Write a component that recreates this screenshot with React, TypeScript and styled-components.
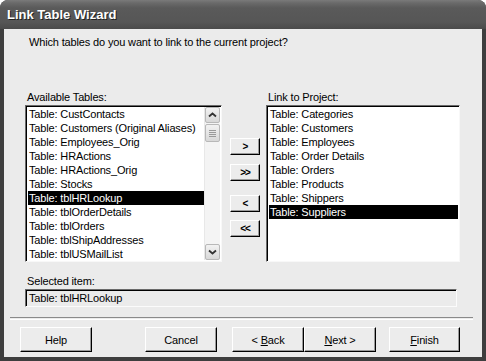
import styled, { createGlobalStyle } from "styled-components";

const Global = createGlobalStyle`
  html, body {
    margin: 0;
    padding: 0;
    background: #ffffff;
  }
  body {
    font-family: "Liberation Sans", Arial, sans-serif;
    font-size: 11px;
    letter-spacing: -0.15px;
    color: #000;
  }
`;

const Window = styled.div`
  width: 486px;
  height: 361px;
  box-sizing: border-box;
  display: flex;
  flex-direction: column;
  background: #3e3e3e;
  border-radius: 8px 8px 0 0;
  overflow: hidden;
`;

const TitleBar = styled.div`
  height: 29px;
  flex: none;
  display: flex;
  align-items: center;
  padding-left: 7px;
  background: linear-gradient(#7a7a7a 0px, #6a6a6a 3px, #5a5a5a 8px, #565656 22px, #4a4a4a 29px);
  color: #fff;
  font-weight: bold;
  font-size: 13px;
  letter-spacing: 0;
  text-shadow: 1px 1px 0 #222;
`;

const Client = styled.div`
  flex: 1;
  margin: 0 4px 4px 4px;
  background: #ebebeb;
  display: flex;
  flex-direction: column;
  padding: 6px 0 0 21px;
`;

const Question = styled.div`
  padding-left: 4px;
  height: 14px;
  line-height: 14px;
`;

const Lists = styled.div`
  display: flex;
  align-items: flex-start;
  margin-top: 41px;
`;

const Column = styled.div<{ $width: number }>`
  width: ${(p) => p.$width}px;
  display: flex;
  flex-direction: column;
`;

const Label = styled.div`
  height: 14px;
  line-height: 14px;
  padding-left: 2px;
  margin-bottom: 1px;
`;

const ListBox = styled.div`
  height: 157px;
  box-sizing: border-box;
  background: #fff;
  border-top: 1px solid #6a6a6a;
  border-left: 1px solid #6a6a6a;
  border-right: 1px solid #f8f8f8;
  border-bottom: 1px solid #f8f8f8;
  box-shadow: inset 1px 1px 0 #000;
  display: flex;
  padding: 1px 1px 1px 2px;
`;

const Items = styled.div`
  flex: 1;
  display: flex;
  flex-direction: column;
  overflow: hidden;
`;

const Item = styled.div<{ $selected?: boolean }>`
  height: 14px;
  line-height: 14px;
  padding-left: 1px;
  white-space: nowrap;
  background: ${(p) => (p.$selected ? "#000" : "transparent")};
  color: ${(p) => (p.$selected ? "#fff" : "#000")};
`;

const ScrollBar = styled.div`
  width: 15px;
  display: flex;
  flex-direction: column;
  background: #f4f4f4;
  border-left: 1px solid #e8e8e8;
`;

const ScrollButton = styled.div`
  height: 16px;
  box-sizing: border-box;
  border: 1px solid #b8b8b8;
  border-radius: 2px;
  background: linear-gradient(#f2f2f2, #d8d8d8);
  display: flex;
  align-items: center;
  justify-content: center;
`;

const Thumb = styled(ScrollButton)`
  height: 18px;
  margin-top: 1px;
  flex-direction: column;
  gap: 1px;
`;

const Grip = styled.div`
  width: 7px;
  height: 1px;
  background: #9a9a9a;
`;

const Track = styled.div`
  flex: 1;
`;

const Movers = styled.div`
  width: 30px;
  display: flex;
  flex-direction: column;
  margin: 0 6px 0 8px;
  padding-top: 48px;
`;

const SmallButton = styled.div<{ $gapAbove: number }>`
  height: 17px;
  box-sizing: border-box;
  margin-top: ${(p) => p.$gapAbove}px;
  background: #ececec;
  border-top: 1px solid #fff;
  border-left: 1px solid #fff;
  border-right: 1px solid #000;
  border-bottom: 1px solid #000;
  box-shadow: inset -1px -1px 0 #9a9a9a;
  display: flex;
  align-items: center;
  justify-content: center;
  font-weight: bold;
  font-size: 10px;
  letter-spacing: -1px;
`;

const Selected = styled.div`
  margin-top: 12px;
  width: 432px;
`;

const Field = styled.div`
  height: 18px;
  box-sizing: border-box;
  margin-top: 1px;
  border-top: 1px solid #6a6a6a;
  border-left: 1px solid #6a6a6a;
  border-right: 1px solid #fbfbfb;
  border-bottom: 1px solid #fbfbfb;
  box-shadow: inset 1px 1px 0 #000;
  padding-left: 3px;
  line-height: 16px;
`;

const Separator = styled.div`
  margin: 10px 0 0 -15px;
  width: 463px;
  height: 1px;
  border-top: 1px solid #8a8a8a;
  border-bottom: 1px solid #ffffff;
`;

const Footer = styled.div`
  display: flex;
  margin: 7px 0 0 -5px;
`;

const Button = styled.div<{ $width: number; $gap: number }>`
  width: ${(p) => p.$width}px;
  margin-left: ${(p) => p.$gap}px;
  height: 25px;
  box-sizing: border-box;
  background: #ececec;
  border-top: 1px solid #fff;
  border-left: 1px solid #fff;
  border-right: 1px solid #000;
  border-bottom: 1px solid #000;
  box-shadow: inset -1px -1px 0 #9a9a9a;
  display: flex;
  align-items: center;
  justify-content: center;
`;

const Caret = ({ down }: { down?: boolean }) => (
  <svg width="9" height="6" viewBox="0 0 9 6">
    <path
      d={down ? "M1 1.5 L4.5 4.5 L8 1.5" : "M1 4.5 L4.5 1.5 L8 4.5"}
      fill="none"
      stroke="#333"
      strokeWidth="1.8"
    />
  </svg>
);

const available = [
  "CustContacts",
  "Customers (Original Aliases)",
  "Employees_Orig",
  "HRActions",
  "HRActions_Orig",
  "Stocks",
  "tblHRLookup",
  "tblOrderDetails",
  "tblOrders",
  "tblShipAddresses",
  "tblUSMailList",
];

const linked = [
  "Categories",
  "Customers",
  "Employees",
  "Order Details",
  "Orders",
  "Products",
  "Shippers",
  "Suppliers",
];

export default function App() {
  return (
    <>
      <Global />
      <Window>
        <TitleBar>Link Table Wizard</TitleBar>
        <Client>
          <Question>Which tables do you want to link to the current project?</Question>
          <Lists>
            <Column $width={197}>
              <Label>Available Tables:</Label>
              <ListBox>
                <Items>
                  {available.map((t) => (
                    <Item key={t} $selected={t === "tblHRLookup"}>
                      Table: {t}
                    </Item>
                  ))}
                </Items>
                <ScrollBar>
                  <ScrollButton>
                    <Caret />
                  </ScrollButton>
                  <Thumb>
                    <Grip />
                    <Grip />
                    <Grip />
                    <Grip />
                  </Thumb>
                  <Track />
                  <ScrollButton>
                    <Caret down />
                  </ScrollButton>
                </ScrollBar>
              </ListBox>
            </Column>
            <Movers>
              <SmallButton $gapAbove={0}>&gt;</SmallButton>
              <SmallButton $gapAbove={9}>&gt;&gt;</SmallButton>
              <SmallButton $gapAbove={14}>&lt;</SmallButton>
              <SmallButton $gapAbove={8}>&lt;&lt;</SmallButton>
            </Movers>
            <Column $width={194}>
              <Label>Link to Project:</Label>
              <ListBox>
                <Items>
                  {linked.map((t) => (
                    <Item key={t} $selected={t === "Suppliers"}>
                      Table: {t}
                    </Item>
                  ))}
                </Items>
              </ListBox>
            </Column>
          </Lists>
          <Selected>
            <Label>Selected item:</Label>
            <Field>Table: tblHRLookup</Field>
          </Selected>
          <Separator />
          <Footer>
            <Button $width={72} $gap={0}>Help</Button>
            <Button $width={72} $gap={53}>Cancel</Button>
            <Button $width={72} $gap={15}>
              &lt;&nbsp;<u>B</u>ack
            </Button>
            <Button $width={72} $gap={0}>
              <u>N</u>ext &gt;
            </Button>
            <Button $width={71} $gap={13}>
              <u>F</u>inish
            </Button>
          </Footer>
        </Client>
      </Window>
    </>
  );
}
